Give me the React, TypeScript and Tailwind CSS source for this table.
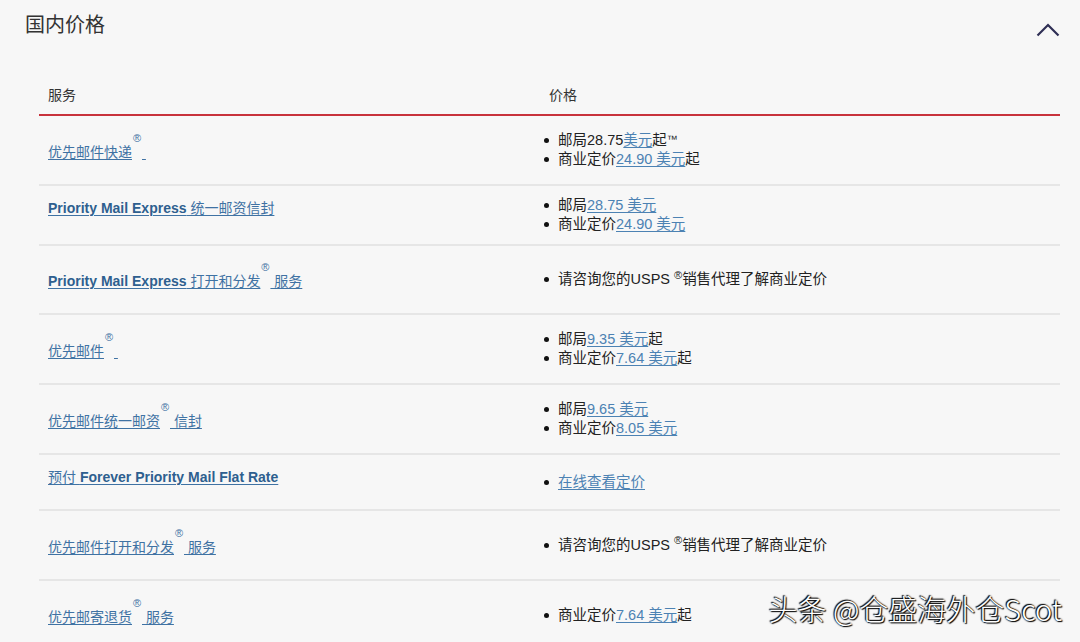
import type { ReactNode } from "react";

const FONT = "font-['Liberation_Sans','Noto_Sans_CJK_SC',sans-serif]";

function Reg() {
  return (
    <span className="inline-block relative -top-[15px] w-[10px] text-center text-[11px] leading-none">®</span>
  );
}

function Bold({ children }: { children: ReactNode }) {
  return <span className="font-bold text-[14px] text-[#2e5f8f]">{children}</span>;
}

function PriceLink({ children }: { children: ReactNode }) {
  return <span className="text-[#4c82b3] underline underline-offset-2">{children}</span>;
}

type Row = {
  h: string;
  shift: string;
  service: ReactNode;
  prices: ReactNode[];
};

const ROWS: Row[] = [
  {
    h: "h-[70px]",
    shift: "pt-[3px]",
    service: <>优先邮件快递<Reg />&nbsp;</>,
    prices: [
      <>邮局28.75<PriceLink>美元</PriceLink>起<sup className="text-[11px] relative -top-[2px]">™</sup></>,
      <>商业定价<PriceLink>24.90 美元</PriceLink>起</>,
    ],
  },
  {
    h: "h-[60px]",
    shift: "pb-[14px]",
    service: <><Bold>Priority Mail Express</Bold> 统一邮资信封</>,
    prices: [
      <>邮局<PriceLink>28.75 美元</PriceLink></>,
      <>商业定价<PriceLink>24.90 美元</PriceLink></>,
    ],
  },
  {
    h: "h-[69px]",
    shift: "pt-[3px]",
    service: <><Bold>Priority Mail Express</Bold> 打开和分发<Reg />&nbsp;服务</>,
    prices: [<>请咨询您的USPS <sup className="text-[11px]">®</sup>销售代理了解商业定价</>],
  },
  {
    h: "h-[70px]",
    shift: "pt-[3px]",
    service: <>优先邮件<Reg />&nbsp;</>,
    prices: [
      <>邮局<PriceLink>9.35 美元</PriceLink>起</>,
      <>商业定价<PriceLink>7.64 美元</PriceLink>起</>,
    ],
  },
  {
    h: "h-[70px]",
    shift: "pt-[3px]",
    service: <>优先邮件统一邮资<Reg />&nbsp;信封</>,
    prices: [
      <>邮局<PriceLink>9.65 美元</PriceLink></>,
      <>商业定价<PriceLink>8.05 美元</PriceLink></>,
    ],
  },
  {
    h: "h-[56px]",
    shift: "pb-[10px]",
    service: <>预付 <Bold>Forever Priority Mail Flat Rate</Bold></>,
    prices: [<PriceLink>在线查看定价</PriceLink>],
  },
  {
    h: "h-[70px]",
    shift: "pt-[3px]",
    service: <>优先邮件打开和分发<Reg />&nbsp;服务</>,
    prices: [<>请咨询您的USPS <sup className="text-[11px]">®</sup>销售代理了解商业定价</>],
  },
  {
    h: "h-[70px]",
    shift: "pt-[3px]",
    service: <>优先邮寄退货<Reg />&nbsp;服务</>,
    prices: [<>商业定价<PriceLink>7.64 美元</PriceLink>起</>],
  },
];

export default function App() {
  return (
    <div className={`relative w-full h-[642px] overflow-hidden bg-[#f7f7f7] ${FONT}`}>
      <div className="flex justify-between pl-[25px] pr-[20px]">
        <h2 className="h-[50px] flex items-center text-[20px] text-[#333]">国内价格</h2>
        <svg width="24" height="14" viewBox="0 0 24 14" className="mt-[23px]" fill="none">
          <polyline points="1.5,12.5 12,2 22.5,12.5" stroke="#2f2f55" strokeWidth="2.2" />
        </svg>
      </div>

      <div className="ml-[39px] mr-[20px]">
        <div className="grid grid-cols-[501px_1fr] h-[66px] items-end pb-[9px] border-b-2 border-[#c8323c] text-[14px] leading-[20px] text-[#333]">
          <div className="pl-[9px]">服务</div>
          <div className="pl-[9px]">价格</div>
        </div>

        {ROWS.map((row, i) => (
          <div key={i} className={`grid grid-cols-[501px_1fr] ${row.h} border-b-2 border-[#e6e6e6] text-[14px]`}>
            <div className={`flex items-center pl-[9px] ${row.shift}`}>
              <a className="text-[#3f72a3] underline underline-offset-2 leading-[20px]">{row.service}</a>
            </div>
            <ul className="flex flex-col justify-center pl-[4px] text-[14.5px] text-[#222]">
              {row.prices.map((p, j) => (
                <li key={j} className="flex items-center gap-[9px] leading-[19px]">
                  <span className="w-[5px] h-[5px] rounded-full bg-[#111] shrink-0" />
                  <span>{p}</span>
                </li>
              ))}
            </ul>
          </div>
        ))}
      </div>

      <div className="absolute right-[18px] top-[590px] text-[29px] leading-[36px] text-white font-['Noto_Sans_CJK_SC',sans-serif] font-light [text-shadow:0_0_2px_#000,1px_1px_1px_#000,-1px_-1px_1px_#000]">
        头条 @仓盛海外仓Scot
      </div>
    </div>
  );
}
